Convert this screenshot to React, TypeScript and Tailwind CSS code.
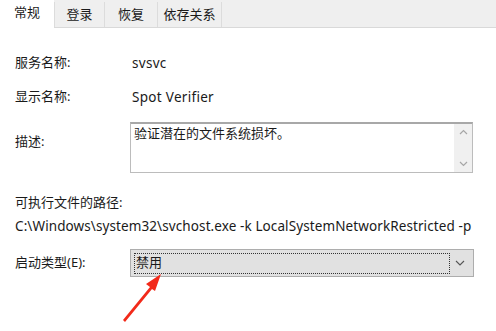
import React from "react";

const font = { fontFamily: '"Noto Sans", "Noto Sans CJK SC", sans-serif' };

export default function App() {
  return (
    <div className="w-[496px] h-[331px] bg-white relative overflow-hidden text-[13px] text-[#1a1a1a]" style={font}>
      {/* Tabs */}
      <div className="h-[28px] bg-[#efefef] border-b border-[#d9d9d9] flex items-end">
        <div className="w-[54px] bg-white flex items-center justify-center mb-[-1px] h-[28px] pb-[2px]">常规</div>
        <div className="w-[51px] h-[25px] border-r border-l border-[#dcdcdc] flex items-center justify-center">登录</div>
        <div className="w-[53px] h-[25px] border-r border-[#dcdcdc] flex items-center justify-center">恢复</div>
        <div className="w-[64px] h-[25px] border-r border-[#dcdcdc] flex items-center justify-center">依存关系</div>
      </div>

      <div className="pl-[15px]">
        <div className="flex items-center h-[20px] mt-[25px]">
          <div className="w-[117px]">服务名称:</div>
          <div className="text-[13.5px] tracking-[0.3px]">svsvc</div>
        </div>
        <div className="flex items-center h-[20px] mt-[14px]">
          <div className="w-[117px]">显示名称:</div>
          <div className="text-[13.5px] tracking-[0.3px]">Spot Verifier</div>
        </div>
        <div className="flex mt-[15px]">
          <div className="w-[115px] pt-[10px]">描述:</div>
          <div className="w-[343px] h-[51px] border border-[#bcbcbc] border-t-[#a8a8a8] border-t-2 flex">
            <div className="flex-1 pl-[3px] leading-[18px]">验证潜在的文件系统损坏。</div>
            <div className="w-[18px] bg-[#f0f0f0] flex flex-col items-center justify-between py-[5px]">
              <svg width="9" height="6" viewBox="0 0 9 6"><path d="M1 5 L4.5 1.5 L8 5" fill="none" stroke="#a6a6a6" strokeWidth="1.2" /></svg>
              <svg width="9" height="6" viewBox="0 0 9 6"><path d="M1 1 L4.5 4.5 L8 1" fill="none" stroke="#a6a6a6" strokeWidth="1.2" /></svg>
            </div>
          </div>
        </div>
        <div className="mt-[20px] h-[20px] flex items-center">可执行文件的路径:</div>
        <div className="mt-[3px] h-[20px] flex items-center whitespace-nowrap text-[13.5px] tracking-[0.1px]">C:\Windows\system32\svchost.exe -k LocalSystemNetworkRestricted -p</div>
        <div className="flex items-center mt-[13px]">
          <div className="w-[115px]">启动类型(E):</div>
          <div className="w-[344px] h-[28px] bg-[#e1e1e1] border border-[#adadad] flex items-center px-[3px]">
            <div className="flex-1 h-[21px] border border-dotted border-[#333] flex items-center pl-[1px]">禁用</div>
            <div className="w-[20px] flex justify-center">
              <svg width="10" height="6" viewBox="0 0 10 6"><path d="M1 1 L5 5 L9 1" fill="none" stroke="#555" strokeWidth="1.1" /></svg>
            </div>
          </div>
        </div>
      </div>

      {/* red arrow */}
      <svg className="absolute left-0 top-0" width="496" height="331" viewBox="0 0 496 331">
        <path d="M123 320 L150 287 L146 284 L161 274 L155 291 L152 289 L125 322 Z" fill="#f22a1a" />
      </svg>
    </div>
  );
}
